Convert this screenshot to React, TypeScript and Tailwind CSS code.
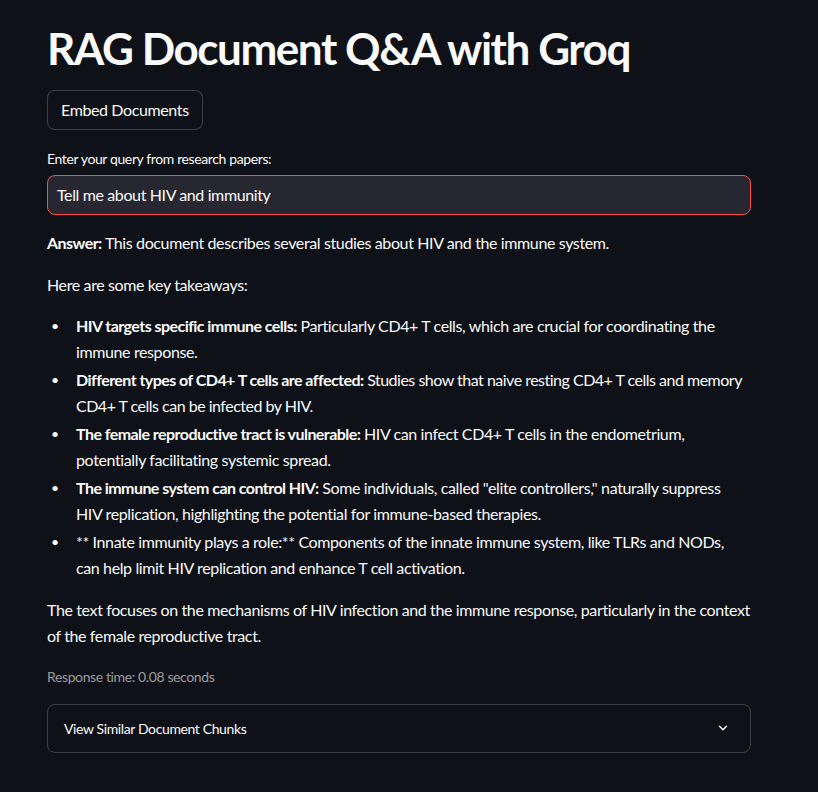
import React from "react";

const bullets: { lead: string; rest: string; bold: boolean; tight?: boolean }[] = [
  {
    lead: "HIV targets specific immune cells:",
    rest: " Particularly CD4+ T cells, which are crucial for coordinating the immune response.",
    bold: true,
  },
  {
    lead: "Different types of CD4+ T cells are affected:",
    rest: " Studies show that naive resting CD4+ T cells and memory CD4+ T cells can be infected by HIV.",
    bold: true,
    tight: true,
  },
  {
    lead: "The female reproductive tract is vulnerable:",
    rest: " HIV can infect CD4+ T cells in the endometrium, potentially facilitating systemic spread.",
    bold: true,
  },
  {
    lead: "The immune system can control HIV:",
    rest: ' Some individuals, called "elite controllers," naturally suppress HIV replication, highlighting the potential for immune-based therapies.',
    bold: true,
  },
  {
    lead: "** Innate immunity plays a role:**",
    rest: " Components of the innate immune system, like TLRs and NODs, can help limit HIV replication and enhance T cell activation.",
    bold: false,
  },
];

export default function App() {
  return (
    <div
      className="min-h-[792px] w-full bg-[#0e1117] text-[#fafafa] tracking-[-0.38px]"
      style={{ fontFamily: '"Lato", "Noto Sans", sans-serif' }}
    >
      <div className="w-[704px] pt-[22px] pb-10 ml-[47px]">
        <h1 className="text-[44px] font-bold leading-[1.2] tracking-[-1.45px]">
          RAG Document Q&amp;A with Groq
        </h1>

        <button className="mt-[15px] h-[40px] px-[13px] rounded-[8px] border border-[#fafafa33] bg-[#0e1117] text-[16px] text-[#fafafa]">
          Embed Documents
        </button>

        <div className="mt-[19px] text-[14px] leading-[20px] text-[#fafafa]">
          Enter your query from research papers:
        </div>
        <div className="mt-[6px] h-[40px] rounded-[8px] border border-[#ff4b4b] bg-[#262730] flex items-center px-[9px] text-[16px]">
          Tell me about HIV and immunity
        </div>

        <div className="mt-[15px] text-[16px] leading-[26px]">
          <p>
            <span className="font-bold tracking-[-0.55px]">Answer:</span> This document describes several studies about HIV and the immune system.
          </p>
          <p className="mt-[16px]">Here are some key takeaways:</p>
          <ul className="mt-[15px] flex flex-col gap-[2px]">
            {bullets.map((b, i) => (
              <li key={i} className="flex">
                <span className="w-[29px] shrink-0 pl-[4px] text-[14px]">•</span>
                <p className={b.tight ? "tracking-[-0.5px]" : "pr-[3px]"}>
                  <span className={b.bold ? "font-bold tracking-[-0.55px]" : ""}>{b.lead}</span>
                  {b.rest}
                </p>
              </li>
            ))}
          </ul>
          <p className="mt-[16px]">
            The text focuses on the mechanisms of HIV infection and the immune response, particularly in the context of the female reproductive tract.
          </p>
        </div>

        <div className="mt-[18px] text-[14px] leading-[20px] text-[#fafafa99]">
          Response time: 0.08 seconds
        </div>

        <div className="mt-[17px] h-[49px] rounded-[8px] border border-[#fafafa33] flex items-center justify-between pl-[16px] pr-[20px] text-[14px]">
          <span>View Similar Document Chunks</span>
          <svg width="14" height="14" viewBox="0 0 24 24" fill="none" stroke="#fafafa" strokeWidth="2.5" strokeLinecap="round" strokeLinejoin="round">
            <path d="M6 9l6 6 6-6" />
          </svg>
        </div>
      </div>
    </div>
  );
}
